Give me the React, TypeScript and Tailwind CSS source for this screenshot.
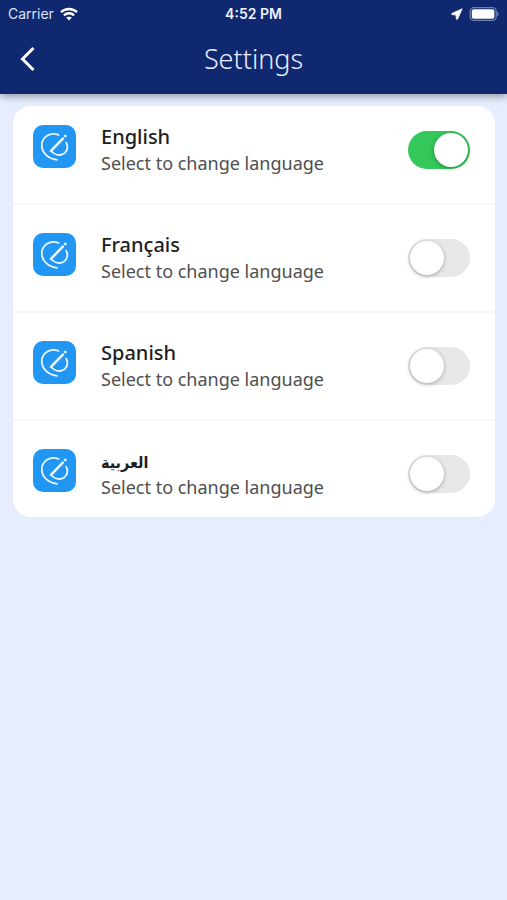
import React, { useState } from 'react';

const LANGUAGES = [
  { code: 'en', name: 'English' },
  { code: 'fr', name: 'Français' },
  { code: 'es', name: 'Spanish' },
  { code: 'ar', name: 'العربية' },
];

const WifiIcon = () => (
  <svg viewBox="0 0 18 14" className="h-[14px] w-[18px]" fill="none" stroke="currentColor" strokeWidth="2.4" aria-hidden="true">
    <path d="M1 5.2C5.5 0.9 12.5 0.9 17 5.2" />
    <path d="M3.9 8.3C6.8 5.6 11.2 5.6 14.1 8.3" />
    <path d="M9 13.5L6.2 10.7C7.8 9.3 10.2 9.3 11.8 10.7Z" fill="currentColor" stroke="none" />
  </svg>
);

const LocationIcon = () => (
  <svg viewBox="0 0 12 12" className="h-3 w-3" fill="currentColor" stroke="currentColor" strokeWidth="0.8" strokeLinejoin="round" aria-hidden="true">
    <path d="M11.2 0.8L0.8 5.5V6.6L5 7L5.4 11.2H6.5Z" />
  </svg>
);

const BatteryIcon = () => (
  <svg viewBox="0 0 30 14" className="h-[14px] w-[30px]" aria-hidden="true">
    <rect x="1.2" y="0.7" width="26" height="12.6" rx="3.8" fill="none" stroke="#6f80b3" strokeWidth="1.3" />
    <rect x="2.8" y="2.3" width="22.6" height="9.4" rx="2" fill="#fff" />
    <path d="M28.2 4.5C30.2 5.2 30.2 8.8 28.2 9.5Z" fill="#6f80b3" />
  </svg>
);

const LanguageIcon = () => (
  <span className="flex h-[43px] w-[43px] shrink-0 items-center justify-center rounded-[10px] bg-[#2196f3]">
    <svg viewBox="0 0 43 43" className="h-full w-full" fill="none" stroke="#eaf6ff" strokeWidth="1.8" strokeLinecap="round" strokeLinejoin="round" aria-hidden="true">
      <path d="M25.6 10C17.2 6.4 8.8 12.4 8.8 20.2C8.8 27.6 15 33.8 24 34.8" />
      <path d="M33.2 17.6C36.6 24.2 31.8 30.2 26.4 30C22.8 29.8 20.2 28.4 18 26" />
      <path d="M18 25.8L29.8 13.6" strokeWidth="2.6" />
      <circle cx="32.2" cy="11" r="1" fill="#eaf6ff" strokeWidth="1" />
    </svg>
  </span>
);

const App: React.FC = () => {
  const [selected, setSelected] = useState('en');

  return (
    <div className="min-h-screen bg-[#e6edfe] font-['Noto_Sans','DejaVu_Sans',sans-serif]">
      <header className="bg-[#0f2870] text-white shadow-[0_2px_8px_rgba(0,0,0,0.4)]">
        <div className="grid h-7 grid-cols-3 items-center px-2 font-['Inter',sans-serif] text-sm">
          <div className="flex items-center gap-1.5 text-[#dbe3f8]">
            <span>Carrier</span>
            <span className="text-white"><WifiIcon /></span>
          </div>
          <span className="text-center font-semibold text-[#eef2ff]">4:52 PM</span>
          <div className="flex items-center justify-end gap-1.5">
            <LocationIcon />
            <BatteryIcon />
          </div>
        </div>

        <div className="grid h-[66px] grid-cols-[56px_1fr_56px] items-center pb-1">
          <button type="button" aria-label="Back" className="flex h-12 items-center justify-center">
            <svg viewBox="0 0 16 26" className="h-[26px] w-4" fill="none" stroke="currentColor" strokeWidth="3" aria-hidden="true">
              <path d="M13.5 2L2.5 13L13.5 24" />
            </svg>
          </button>
          <h1 className="text-center text-[27px] leading-8 font-light text-[#e8eeff]">Settings</h1>
        </div>
      </header>

      <main className="py-3 pr-3 pl-[13px]">
        <ul className="rounded-[18px] bg-white">
          {LANGUAGES.map((lang) => (
            <li
              key={lang.code}
              className="border-b-2 border-[#f7f7f7] pt-7 pb-[35px] first:pt-[19px] last:border-b-0 last:pb-[25px]"
            >
              <label htmlFor={lang.code} className="flex h-[43px] items-center pr-[25px] pl-5">
                <LanguageIcon />
                <span className="ml-[25px] flex flex-1 flex-col pt-1.5">
                  <span lang={lang.code} className="h-[26px] text-xl leading-[26px] font-medium text-[#1e1e1e]">
                    {lang.code === 'ar' ? (
                      <bdi className="font-['DejaVu_Sans_Condensed','DejaVu_Sans',sans-serif] text-base leading-[26px] font-bold">
                        {lang.name}
                      </bdi>
                    ) : (
                      lang.name
                    )}
                  </span>
                  <span className="h-[26px] text-lg leading-[26px] text-[#4f4f4f]">Select to change language</span>
                </span>
                <input
                  id={lang.code}
                  type="checkbox"
                  role="switch"
                  checked={selected === lang.code}
                  onChange={() => setSelected(lang.code)}
                  className="mt-1.5 flex h-[38px] w-[62px] shrink-0 appearance-none rounded-full bg-[#e8e8e8] p-[2px] before:h-[34px] before:w-[34px] before:rounded-full before:bg-white before:shadow-[0_1px_4px_rgba(0,0,0,0.3)] checked:justify-end checked:bg-[#34c759]"
                />
              </label>
            </li>
          ))}
        </ul>
      </main>
    </div>
  );
};

export default App;
